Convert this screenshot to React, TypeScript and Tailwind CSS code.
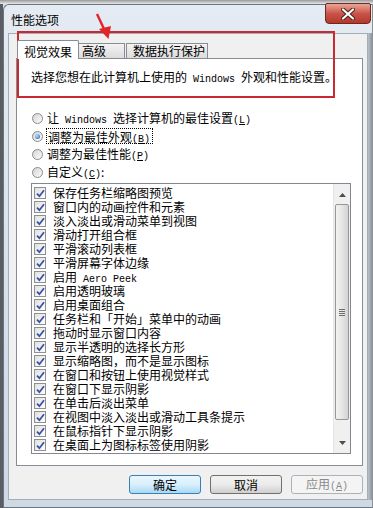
import React from "react";

type row = { text: string; latin?: string };

const effects: row[] = [
  { text: "保存任务栏缩略图预览" },
  { text: "窗口内的动画控件和元素" },
  { text: "淡入淡出或滑动菜单到视图" },
  { text: "滑动打开组合框" },
  { text: "平滑滚动列表框" },
  { text: "平滑屏幕字体边缘" },
  { text: "启用", latin: " Aero Peek" },
  { text: "启用透明玻璃" },
  { text: "启用桌面组合" },
  { text: "任务栏和「开始」菜单中的动画" },
  { text: "拖动时显示窗口内容" },
  { text: "显示半透明的选择长方形" },
  { text: "显示缩略图，而不是显示图标" },
  { text: "在窗口和按钮上使用视觉样式" },
  { text: "在窗口下显示阴影" },
  { text: "在单击后淡出菜单" },
  { text: "在视图中淡入淡出或滑动工具条提示" },
  { text: "在鼠标指针下显示阴影" },
  { text: "在桌面上为图标标签使用阴影" },
];

// half-width latin like the old bitmap font
function Lat({ children }: { children: React.ReactNode }) {
  return <span className="font-['Liberation_Mono',monospace] text-[10px] leading-none">{children}</span>;
}

function Key({ k }: { k: string }) {
  return (
    <Lat>
      (<span className="underline">{k}</span>)
    </Lat>
  );
}

function Radio({ checked }: { checked?: boolean }) {
  return (
    <span className="w-[11px] h-[11px] shrink-0 rounded-full border border-[#8a8a8a] bg-linear-to-br from-[#d4d4d4] to-[#fdfdfd] flex items-center justify-center">
      {checked && (
        <span className="w-[5px] h-[5px] rounded-full bg-[radial-gradient(circle_at_35%_35%,#b9e2ff,#1d5db4)]" />
      )}
    </span>
  );
}

function Check() {
  return (
    <span className="w-[12px] h-[12px] shrink-0 border border-[#8e8f8f] bg-linear-to-br from-[#e0e0e0] to-white flex items-center justify-center">
      <svg width="9" height="9" viewBox="0 0 9 9">
        <path d="M1 4.6 L3.4 7.2 L8 1.2" stroke="#3953a4" strokeWidth="1.8" fill="none" />
      </svg>
    </span>
  );
}

function Scrollbar() {
  return (
    <div className="w-[17px] shrink-0 flex flex-col bg-[#f0f0f0] border-l border-[#e6e6e6]">
      <div className="h-[17px] flex items-end justify-center pb-[4px]">
        <svg width="7" height="4" viewBox="0 0 7 4">
          <path d="M0 4 L3.5 0 L7 4 Z" fill="#4d4d4d" />
        </svg>
      </div>
      <div className="flex-1 flex flex-col pt-[3px] pb-[16px] px-[1px]">
        <div className="flex-1 rounded-[2px] border border-[#979797] bg-linear-to-r from-[#f3f3f3] via-[#e6e6e6] to-[#d2d2d2] flex flex-col items-center justify-center gap-[1px]">
          <span className="w-[6px] h-[1px] bg-[#6e6e6e]" />
          <span className="w-[6px] h-[1px] bg-[#6e6e6e]" />
          <span className="w-[6px] h-[1px] bg-[#6e6e6e]" />
          <span className="w-[6px] h-[1px] bg-[#6e6e6e]" />
        </div>
      </div>
      <div className="h-[17px] flex items-start justify-center pt-[5px]">
        <svg width="7" height="4" viewBox="0 0 7 4">
          <path d="M0 0 L3.5 4 L7 0 Z" fill="#4d4d4d" />
        </svg>
      </div>
    </div>
  );
}

export default function App() {
  return (
    <div className="relative w-[373px] h-[508px] overflow-hidden bg-[#dfe3e8] font-['Noto_Sans_CJK_SC',sans-serif] text-[12px] leading-[14px] text-black">
      {/* page behind the dialog */}
      <div className="h-[4px] bg-linear-to-b from-[#9a9a9a] to-[#e9e9e9]" />
      <div className="flex h-[504px]">
        <div className="w-[3px] bg-[#5a5d61]" />
        {/* WINDOW */}
        <div className="flex-1 flex flex-col rounded-tl-[6px] border border-[#6b7683] border-r-[#8d9196] bg-linear-to-b from-[#e4ebf2] via-[#d9e2eb] to-[#cfd9e4]">
          <div className="h-[28px] flex justify-between items-start">
            <span className="pl-[7px] pt-[8px]">性能选项</span>
            <div className="-mt-[2px] mr-[1px] w-[46px] h-[21px] rounded-b-[4px] rounded-t-[2px] border border-[#6b2a22] bg-linear-to-b from-[#e9a597] via-[#c9544a] to-[#b3372b] flex items-center justify-center">
              <svg width="14" height="12" viewBox="0 0 14 12">
                <path d="M2 1.5 L12 10.5 M12 1.5 L2 10.5" stroke="#4a1c16" strokeWidth="4" strokeLinecap="round" />
                <path d="M2 1.5 L12 10.5 M12 1.5 L2 10.5" stroke="#ffffff" strokeWidth="2.2" strokeLinecap="round" />
              </svg>
            </div>
          </div>

          {/* CLIENT AREA */}
          <div className="flex-1 ml-[4px] mb-[7px] flex">
            <div className="flex-1 flex flex-col bg-[#f0f0f0] border border-[#a3aebb] pt-[6px]">
              {/* tabs */}
              <div className="relative z-10 h-[19px] flex items-end ml-[8px]">
                <div className="h-[19px] w-[62px] pl-[6px] pt-[4px] bg-white border border-b-0 border-[#898c95] rounded-t-[2px]">
                  视觉效果
                </div>
                <div className="h-[15px] w-[46px] mb-[1px] pl-[3px] bg-linear-to-b from-[#f3f3f3] to-[#dcdcdc] border border-b-0 border-l-0 border-[#898c95]">
                  高级
                </div>
                <div className="h-[15px] w-[82px] mb-[1px] ml-[1px] pl-[6px] bg-linear-to-b from-[#f3f3f3] to-[#dcdcdc] border border-b-0 border-[#898c95]">
                  数据执行保护
                </div>
              </div>

              {/* panel */}
              <div className="-mt-[1px] ml-[7px] mr-[4px] h-[408px] bg-white border border-[#898c95] flex flex-col">
                <p className="mt-[11px] pl-[14px] whitespace-nowrap">
                  选择您想在此计算机上使用的<Lat> Windows </Lat>外观和性能设置。
                </p>

                <div className="mt-[24px] pl-[15px] flex flex-col">
                  <label className="h-[18px] flex items-center gap-[4px]">
                    <Radio />
                    <span>
                      让<Lat> Windows </Lat>选择计算机的最佳设置<Key k="L" />
                    </span>
                  </label>
                  <label className="h-[18px] flex items-center gap-[3px]">
                    <Radio checked />
                    <span className="h-[16px] pl-[1px] pr-[2px] pt-[1px] border border-dotted border-black">
                      调整为最佳外观<Key k="B" />
                    </span>
                  </label>
                  <label className="h-[18px] flex items-center gap-[4px]">
                    <Radio />
                    <span>
                      调整为最佳性能<Key k="P" />
                    </span>
                  </label>
                  <label className="h-[18px] flex items-center gap-[4px]">
                    <Radio />
                    <span>
                      自定义<Key k="C" />:
                    </span>
                  </label>
                </div>

                {/* list of effects */}
                <div className="mt-[2px] ml-[14px] mr-[11px] h-[271px] border border-[#828790] bg-white flex">
                  <ul className="flex-1 pt-[2px] pl-[2px] overflow-hidden">
                    {effects.map((e) => (
                      <li key={e.text + (e.latin ?? "")} className="h-[14px] flex items-center gap-[7px] whitespace-nowrap">
                        <Check />
                        <span>
                          {e.text}
                          {e.latin && <Lat>{e.latin}</Lat>}
                        </span>
                      </li>
                    ))}
                  </ul>
                  <Scrollbar />
                </div>
              </div>

              {/* buttons */}
              <div className="mt-[9px] mr-[4px] flex justify-end gap-[9px]">
                <button className="w-[72px] h-[19px] rounded-[3px] border border-[#3c7fb1] bg-linear-to-b from-[#eaf6fd] via-[#d9f0fc] to-[#a7d9f5] text-[12px] leading-[14px]">
                  确定
                </button>
                <button className="w-[72px] h-[19px] rounded-[3px] border border-[#707070] bg-linear-to-b from-[#f2f2f2] via-[#ebebeb] to-[#cfcfcf] text-[12px] leading-[14px]">
                  取消
                </button>
                <button className="w-[72px] h-[19px] rounded-[3px] border border-[#adb2b5] bg-[#f4f4f4] text-[12px] leading-[14px] text-[#8a8a8a]">
                  应用<Key k="A" />
                </button>
              </div>
            </div>
            {/* darker right frame */}
            <div className="w-[4px] bg-linear-to-r from-[#b9c2cc] to-[#8e959d]" />
          </div>
        </div>
      </div>

      {/* red annotation drawn over the screenshot */}
      <div className="absolute left-[17px] top-[31px] w-[318px] h-[67px] border-2 border-[#c92a2f]" />
      <svg className="absolute left-0 top-0 pointer-events-none" width="373" height="60" viewBox="0 0 373 60">
        <path d="M97 14 L104.5 30" stroke="#e0262a" strokeWidth="2.4" />
        <path d="M108.5 39 L99 29 L111 26 Z" fill="#e0262a" />
      </svg>
    </div>
  );
}
